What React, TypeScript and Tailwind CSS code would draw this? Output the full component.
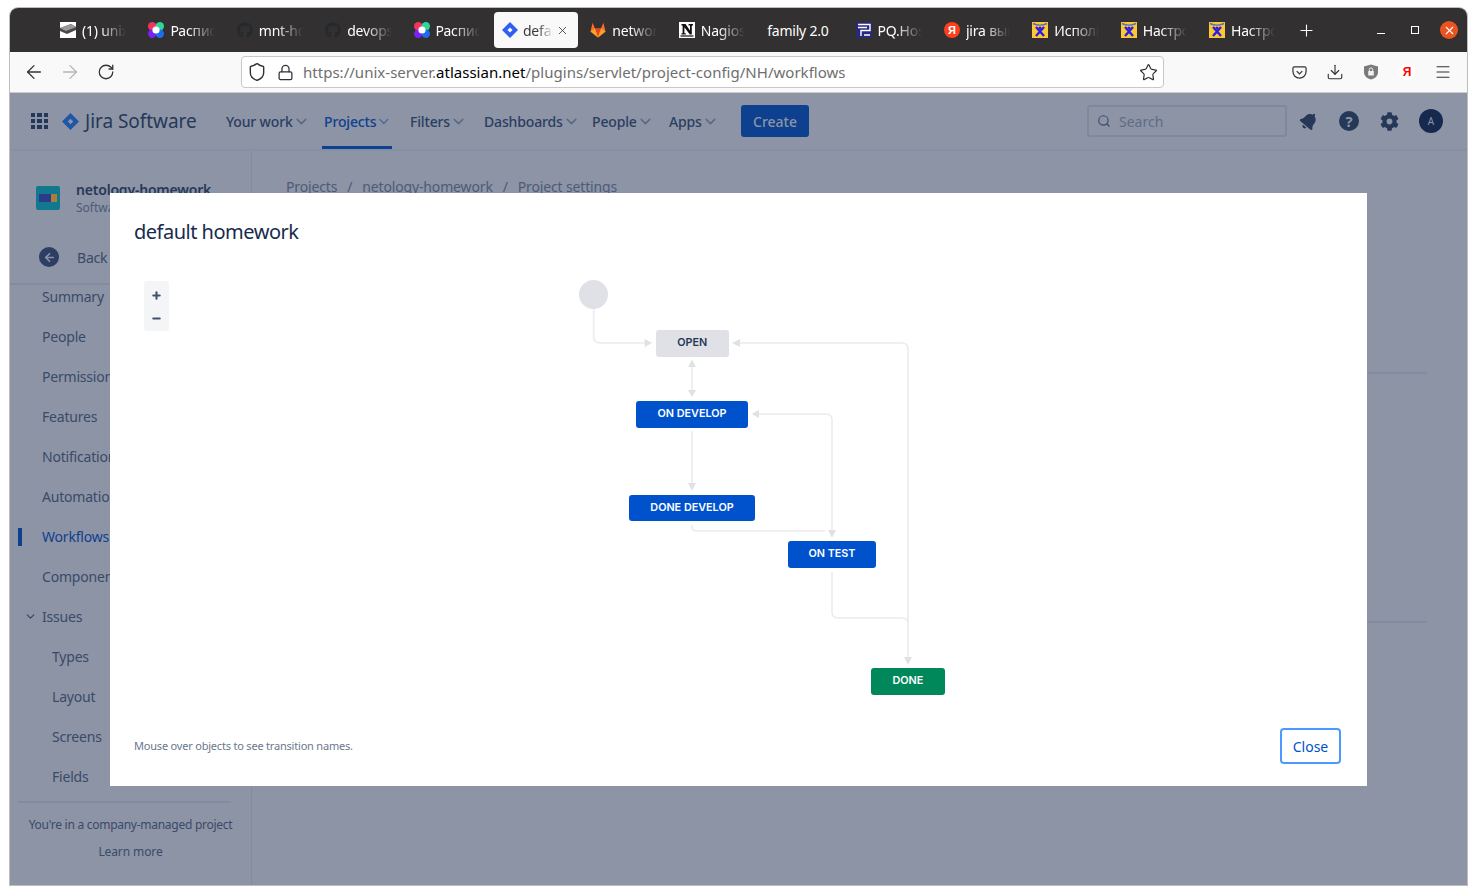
import { ArrowLeft, ArrowRight, RotateCw, Shield, Lock, Star, Download, Menu, Search, ChevronDown, Plus, Minus, X } from "lucide-react";
import { FaGithub, FaBell, FaCog } from "react-icons/fa";

const ui = "font-['Noto_Sans',sans-serif]";

function RainbowIcon() {
  return (
    <svg viewBox="0 0 16 16" className="h-4 w-4 shrink-0">
      <circle cx="4.2" cy="4.2" r="4.2" fill="#f0365f" />
      <circle cx="11.8" cy="4.2" r="4.2" fill="#2fd69b" />
      <circle cx="4.2" cy="11.8" r="4.2" fill="#7a22f5" />
      <circle cx="11.8" cy="11.8" r="4.2" fill="#1f6cf0" />
      <circle cx="8" cy="8" r="3.6" fill="#fff" />
    </svg>
  );
}

function ServerIcon() {
  return (
    <svg viewBox="0 0 16 16" className="h-4 w-4 shrink-0">
      <rect width="16" height="16" fill="#fff" />
      <path d="M0 6 L11 2 L16 5 L16 8 L7 12 L0 9 Z" fill="#4a4a4a" />
      <path d="M0 6 L11 2 L16 5 L6 9 Z" fill="#9a9a9a" />
    </svg>
  );
}

function GitlabIcon() {
  return (
    <svg viewBox="0 0 16 16" className="h-4 w-4 shrink-0">
      <path d="M8 15.5 L0.5 9.5 L2.6 0.8 L5 6.5 H11 L13.4 0.8 L15.5 9.5 Z" fill="#fc6d26" />
      <path d="M8 15.5 L5 6.5 H11 Z" fill="#e24329" />
      <path d="M8 15.5 L0.5 9.5 L5 6.5 Z" fill="#fca326" />
      <path d="M8 15.5 L15.5 9.5 L11 6.5 Z" fill="#fca326" />
    </svg>
  );
}

function NotionIcon() {
  return (
    <div className="flex h-4 w-4 shrink-0 items-center justify-center bg-white">
      <svg viewBox="0 0 16 16" className="h-4 w-4">
        <path d="M2.5 2 H6.5 L11 8.5 V3.4 H9.6 V2 H14 V3.4 H12.8 V12.6 H10.8 L5.4 5.2 V11.2 H6.8 V12.6 H2.5 V11.2 H3.6 V3.4 H2.5 Z" fill="#111" />
        <rect x="1.5" y="13.4" width="13" height="1.2" fill="#111" />
      </svg>
    </div>
  );
}

function PqIcon() {
  return (
    <svg viewBox="0 0 16 16" className="h-4 w-4 shrink-0">
      <rect width="16" height="16" rx="1" fill="#27297a" />
      <path d="M2 2.5 H14 V8.5 H5 V14 M2 5.5 H11 M8 13 H14" stroke="#fff" strokeWidth="1.4" fill="none" />
    </svg>
  );
}

function YandexIcon() {
  return (
    <div className="flex h-4 w-4 shrink-0 items-center justify-center rounded-full bg-[#fc3f1d] font-['Liberation_Sans',sans-serif] text-[11px] font-bold leading-none text-white">
      Я
    </div>
  );
}

function BeeIcon() {
  return (
    <svg viewBox="0 0 16 16" className="h-4 w-4 shrink-0">
      <rect width="16" height="16" fill="#fcc934" />
      <path d="M1 1.5 C5 3.5 11 3.5 15 1.5" stroke="#4b6fd8" strokeWidth="1.4" fill="none" />
      <path d="M4 5 L12 14 M12 5 L4 14" stroke="#2a1fe0" strokeWidth="2.4" />
      <circle cx="8" cy="6" r="1.6" fill="#2a1fe0" />
    </svg>
  );
}

function JiraDiamond({ className, color }: { className: string; color: string }) {
  return (
    <svg viewBox="0 0 16 16" className={className}>
      <path d="M8 0 L16 8 L8 16 L0 8 Z M8 5.4 L5.4 8 L8 10.6 L10.6 8 Z" fill={color} fillRule="evenodd" />
    </svg>
  );
}

const tabs = [
  { icon: <ServerIcon />, title: "(1) unix-server" },
  { icon: <RainbowIcon />, title: "Расписание" },
  { icon: <FaGithub className="h-4 w-4 shrink-0 text-[#24292e]" />, title: "mnt-homework" },
  { icon: <FaGithub className="h-4 w-4 shrink-0 text-[#24292e]" />, title: "devops-netology" },
  { icon: <RainbowIcon />, title: "Расписание" },
  { icon: <JiraDiamond className="h-4 w-4 shrink-0" color="#2f5ff0" />, title: "default", active: true },
  { icon: <GitlabIcon />, title: "network" },
  { icon: <NotionIcon />, title: "Nagios" },
  { icon: null, title: "family 2.0", full: true },
  { icon: <PqIcon />, title: "PQ.Hosting" },
  { icon: <YandexIcon />, title: "jira вышла" },
  { icon: <BeeIcon />, title: "Использование" },
  { icon: <BeeIcon />, title: "Настройка" },
  { icon: <BeeIcon />, title: "Настройка" },
];

function TabBar() {
  return (
    <div className="flex h-[44px] shrink-0 items-stretch rounded-t-[8px] bg-[#323030] pl-[40px]">
      {tabs.map((t, i) =>
        t.active ? (
          <div key={i} className="w-[88.4px] shrink-0 py-[4px] pl-[2px] pr-[2px]">
            <div className="flex h-full items-center gap-[5px] rounded-[4px] bg-[#f9f9fa] pl-[8px] pr-[6px] text-[14px] tracking-[-0.2px] text-[#3a3a3a]">
              {t.icon}
              <span className="w-[30px] overflow-hidden whitespace-nowrap [mask-image:linear-gradient(to_right,#000_50%,transparent)]">{t.title}</span>
              <X size={13} strokeWidth={1.5} className="-ml-[2px] shrink-0 text-[#333]" />
            </div>
          </div>
        ) : (
          <div key={i} className="flex w-[88.4px] shrink-0 items-center gap-[6px] pl-[10px] pr-[12px] text-[14px] tracking-[-0.2px] text-white">
            {t.icon}
            <span className={t.full ? "whitespace-nowrap" : "overflow-hidden whitespace-nowrap [mask-image:linear-gradient(to_right,#000_40%,transparent)]"}>{t.title}</span>
          </div>
        )
      )}
      <div className="flex w-[38px] items-center justify-center text-white">
        <Plus size={19} strokeWidth={1.4} />
      </div>
      <div className="ml-auto flex items-center pr-[1px] text-white">
        <div className="flex w-[34px] justify-center"><div className="mt-[6px] h-px w-[8px] bg-white" /></div>
        <div className="flex w-[34px] justify-center"><div className="h-[8px] w-[8px] border border-white" /></div>
        <div className="flex w-[34px] justify-center">
          <div className="flex h-[18px] w-[18px] items-center justify-center rounded-full bg-[#e95420]"><X size={13} strokeWidth={2} /></div>
        </div>
      </div>
    </div>
  );
}

function ToolBar() {
  return (
    <div className="flex h-[41px] shrink-0 items-center border-b border-[#ccc] bg-[#f9f9fa] text-[#333]">
      <div className="flex w-[231px] shrink-0 pl-[6px]">
        <div className="flex w-[36px] justify-center"><ArrowLeft size={22} strokeWidth={1.4} /></div>
        <div className="flex w-[36px] justify-center text-[#b5b5b5]"><ArrowRight size={22} strokeWidth={1.4} /></div>
        <div className="flex w-[36px] items-center justify-center"><RotateCw size={18} strokeWidth={1.7} /></div>
      </div>
      <div className="flex h-[32px] w-[923px] shrink-0 items-center rounded-[4px] border border-[#c8c8c8] bg-white pl-[5px] pr-[5px]">
        <Shield size={20} strokeWidth={1.7} className="shrink-0" />
        <Lock size={17} strokeWidth={1.8} className="ml-[10px] shrink-0" />
        <span className="ml-[9px] whitespace-nowrap text-[15px] tracking-[0.02px] text-[#6e6e6e]">
          https://unix-server.<span className="text-black">atlassian.net</span>/plugins/servlet/project-config/NH/workflows
        </span>
        <Star size={19} strokeWidth={1.5} className="ml-auto shrink-0" />
      </div>
      <div className="ml-[117px] flex items-center">
        <div className="flex w-[36px] justify-center">
          <svg viewBox="0 0 16 16" className="h-[15px] w-[15px]" fill="none" stroke="#333" strokeWidth="1.3">
            <path d="M2.5 2 H13.5 A1.5 1.5 0 0 1 15 3.5 V7 A7 7 0 0 1 1 7 V3.5 A1.5 1.5 0 0 1 2.5 2 Z" />
            <path d="M5 6.5 L8 9.5 L11 6.5" />
          </svg>
        </div>
        <div className="flex w-[36px] justify-center"><Download size={18} strokeWidth={1.5} /></div>
        <div className="flex w-[36px] justify-center">
          <svg viewBox="0 0 16 16" className="h-[16px] w-[16px]">
            <path d="M8 0.5 L15 2.5 V8 C15 12 12 14.5 8 15.5 C4 14.5 1 12 1 8 V2.5 Z" fill="#7a7a7a" />
            <rect x="5.2" y="7" width="5.6" height="4.6" rx="0.6" fill="#f0f0f0" />
            <path d="M6.3 7 V5.6 A1.7 1.7 0 0 1 9.7 5.6 V7" stroke="#f0f0f0" strokeWidth="1" fill="none" />
          </svg>
        </div>
        <div className="flex w-[36px] justify-center">
          <div className="flex h-[16px] w-[16px] items-center justify-center rounded-full bg-white font-['Liberation_Sans',sans-serif] text-[12px] font-bold leading-none text-[#f00]">Я</div>
        </div>
        <div className="flex w-[36px] justify-center"><Menu size={18} strokeWidth={1.4} /></div>
      </div>
    </div>
  );
}

const navItems = [
  { label: "Your work", cls: "w-[98px]" },
  { label: "Projects", cls: "w-[86px]", active: true },
  { label: "Filters", cls: "w-[74px]" },
  { label: "Dashboards", cls: "w-[108px]" },
  { label: "People", cls: "w-[77px]" },
  { label: "Apps", cls: "w-[74px]" },
];

function JiraHeader() {
  return (
    <div className="flex h-[58px] shrink-0 items-center border-b-2 border-[#8490a3] pl-[21px] text-[#2b3d61]">
      <div className="grid h-[16px] w-[17px] shrink-0 grid-cols-3 gap-[2px]">
        {Array.from({ length: 9 }).map((_, i) => (
          <div key={i} className="bg-[#253858]" />
        ))}
      </div>
      <JiraDiamond className="ml-[14px] h-[17px] w-[17px] shrink-0" color="#1f56a8" />
      <span className="ml-[6px] w-[139px] whitespace-nowrap text-[19px] tracking-[-0.05px] text-[#253858]">Jira Software</span>
      <div className="flex h-full items-stretch">
        {navItems.map((n) => (
          <div key={n.label} className={`${n.cls} shrink-0`}>
            <div className={n.active ? "flex h-full w-[70px] items-center border-b-[3px] border-[#0d408f] pl-[2px] pt-[3px] text-[#0f408f]" : "flex h-full items-center pl-[2px]"}>
              <span className="whitespace-nowrap text-[14px] font-medium tracking-[-0.15px]">{n.label}</span>
              <ChevronDown size={17} strokeWidth={2} className="opacity-50" />
            </div>
          </div>
        ))}
      </div>
      <div className="flex h-[32px] w-[68px] shrink-0 items-center justify-center rounded-[3px] bg-[#0d408f] text-[14px] font-medium text-[#8c94a5]">Create</div>
      <div className="ml-[278px] flex h-[32px] w-[200px] shrink-0 items-center rounded-[3px] border-2 border-[#7f899c] pl-[8px] text-[14px] text-[#5f6c85]">
        <Search size={14} strokeWidth={2} className="text-[#3f4e6c]" />
        <span className="ml-[8px]">Search</span>
      </div>
      <div className="ml-[2px] flex items-center">
        <div className="flex w-[40px] justify-center"><FaBell size={18} className="rotate-[40deg] text-[#253858]" /></div>
        <div className="flex w-[40px] justify-center">
          <div className="flex h-[20px] w-[20px] items-center justify-center rounded-full bg-[#253858] text-[15px] font-bold leading-none text-[#8c94a5]">?</div>
        </div>
        <div className="flex w-[40px] justify-center"><FaCog size={19} className="text-[#253858]" /></div>
        <div className="ml-[10px] flex h-[24px] w-[24px] items-center justify-center rounded-full bg-[#16294f] text-[10px] text-[#8c94a5]">A</div>
      </div>
    </div>
  );
}

const sideItems = [
  { label: "Summary" },
  { label: "People" },
  { label: "Permissions" },
  { label: "Features" },
  { label: "Notifications" },
  { label: "Automation" },
  { label: "Workflows", active: true },
  { label: "Components" },
  { label: "Issues", chevron: true },
  { label: "Types", sub: true },
  { label: "Layout", sub: true },
  { label: "Screens", sub: true },
  { label: "Fields", sub: true },
];

function Sidebar() {
  return (
    <div className="flex w-[242px] shrink-0 flex-col border-r border-[#838b9d] text-[#3a4a69]">
      <div className="flex h-[54px] items-center pl-[26px] pt-[40px]">
        <div className="flex h-[24px] w-[24px] shrink-0 items-center justify-center rounded-[2px] bg-[#12788f]">
          <div className="flex h-[8px] w-[18px]">
            <div className="w-[12px] bg-[#2b3a8a]" />
            <div className="w-[6px] bg-[#a87f3a]" />
          </div>
        </div>
        <div className="ml-[16px] flex flex-col">
          <span className="whitespace-nowrap text-[14px] font-semibold leading-[20px] tracking-[-0.2px] text-[#253858]">netology-homework</span>
          <span className="text-[12px] leading-[16px] text-[#4d5b78]">Software project</span>
        </div>
      </div>
      <div className="mt-[33px] flex h-[47px] items-center border-b-2 border-[#838c9e] pb-[7px] pl-[29px]">
        <div className="flex h-[20px] w-[20px] items-center justify-center rounded-full bg-[#2c3e63]">
          <ArrowLeft size={13} strokeWidth={3} className="text-[#8c94a5]" />
        </div>
        <span className="ml-[18px] text-[14px] tracking-[-0.2px]">Back to project</span>
      </div>
      <div className="-mt-[9px] flex flex-col">
        {sideItems.map((s) => (
          <div key={s.label} className="relative flex h-[40px] items-center text-[14px] tracking-[-0.2px]">
            {s.active && <div className="absolute left-[8px] top-[12px] h-[18px] w-[4px] bg-[#0d408f]" />}
            {s.chevron && <ChevronDown size={13} strokeWidth={2.5} className="absolute left-[14px]" />}
            <span className={`whitespace-nowrap ${s.sub ? "pl-[42px]" : "pl-[32px]"} ${s.active ? "text-[#0f408f]" : ""}`}>{s.label}</span>
          </div>
        ))}
      </div>
      <div className="ml-[8px] mt-[5px] w-[213px] border-t-2 border-[#838c9e]" />
      <div className="mt-[13px] whitespace-nowrap text-center text-[12px] tracking-[-0.27px]">You're in a company-managed project</div>
      <div className="mt-[9px] text-center text-[12px] tracking-[-0.1px]">Learn more</div>
    </div>
  );
}

function PageContent() {
  return (
    <div className="flex flex-1 flex-col pl-[34px] pt-[25px] text-[14px] tracking-[-0.15px] text-[#4d5b78]">
      <div className="flex gap-[10px] whitespace-nowrap">
        <span>Projects</span>
        <span>/</span>
        <span>netology-homework</span>
        <span>/</span>
        <span>Project settings</span>
      </div>
      <div className="ml-auto mr-[40px] mt-[175px] h-[2px] w-[60px] bg-[#838c9e]" />
      <div className="ml-auto mr-[40px] mt-[247px] h-[2px] w-[60px] bg-[#838c9e]" />
    </div>
  );
}

const nodes = [
  { label: "OPEN", cls: "left-[545.5px] top-[137px] w-[73.5px] bg-[#dfe1e6] text-[#253858]" },
  { label: "ON DEVELOP", cls: "left-[526px] top-[208px] w-[112px] bg-[#0052cc] text-white" },
  { label: "DONE DEVELOP", cls: "left-[519px] top-[301.5px] w-[126px] bg-[#0052cc] text-white" },
  { label: "ON TEST", cls: "left-[677.7px] top-[348.3px] w-[88.6px] bg-[#0052cc] text-white" },
  { label: "DONE", cls: "left-[761px] top-[475.3px] w-[73.7px] bg-[#00875a] text-white" },
];

// diagram coordinates are relative to the modal
function Connectors() {
  const line = "#ebecf0";
  const head = "#dfe1e6";
  return (
    <svg className="absolute left-0 top-0" width="1257" height="593" fill="none">
      <g stroke={line} strokeWidth="1.6">
        <path d="M483.7 116 V144 Q483.7 150 489.7 150 H535" />
        <path d="M582 174 V197" />
        <path d="M582 238 V290" />
        <path d="M649 221 H716 Q722 221 722 227 V337" />
        <path d="M582 332 V334 Q582 338 586 338 H715" />
        <path d="M630 150 H792 Q798 150 798 156 V464" />
        <path d="M722 379 V419 Q722 425 728 425 H792 Q798 425 798 431" />
      </g>
      <g fill={head}>
        <path d="M542 150 L534.7 146 V154 Z" />
        <path d="M582 166.5 L578 174 H586 Z" />
        <path d="M582 204 L578 197 H586 Z" />
        <path d="M582 297.7 L578 290 H586 Z" />
        <path d="M641.7 221 L649 217 V225 Z" />
        <path d="M722 344.7 L718 337 H726 Z" />
        <path d="M622 150 L630 146 V154 Z" />
        <path d="M798 472 L794 464 H802 Z" />
      </g>
    </svg>
  );
}

function WorkflowModal() {
  return (
    <div className="absolute left-[100px] top-[100px] flex h-[593px] w-[1257px] flex-col bg-white pl-[24px] pr-[26px]">
      <h2 className="pt-[25px] text-[20px] leading-[28px] tracking-[-0.5px] text-[#172b4d]">default homework</h2>
      <div className="ml-[10px] mt-[35px] flex h-[50px] w-[25px] flex-col items-center justify-center gap-[12px] rounded-[3px] bg-[#f4f5f7] pt-[1px] text-[#42526e]">
        <Plus size={11} strokeWidth={4.5} />
        <Minus size={11} strokeWidth={4.5} />
      </div>
      <Connectors />
      <div className="absolute left-[469px] top-[87px] h-[29px] w-[29px] rounded-full bg-[#dfe1e6]" />
      {nodes.map((n) => (
        <div key={n.label} className={`absolute flex h-[26.5px] items-center justify-center rounded-[3px] font-['Inter',sans-serif] text-[10.8px] font-semibold ${n.cls}`}>
          {n.label}
        </div>
      ))}
      <div className="mt-auto flex items-center justify-between pb-[22px]">
        <span className="text-[11px] tracking-[-0.2px] text-[#6b778c]">Mouse over objects to see transition names.</span>
        <div className="flex h-[36px] w-[61px] items-center justify-center rounded-[4px] border-2 border-[#4c9aff] text-[14px] text-[#0052cc]">Close</div>
      </div>
    </div>
  );
}

export default function App() {
  return (
    <div className={`h-[895px] w-[1477px] overflow-hidden bg-white pl-[10px] pt-[8px] ${ui}`}>
      <div className="flex h-[877px] w-[1457px] flex-col rounded-t-[8px] shadow-[0_0_0_1px_#bdbdbd]">
        <TabBar />
        <ToolBar />
        <div className="relative flex min-h-0 flex-1 flex-col overflow-hidden bg-[#8c94a5]">
          <JiraHeader />
          <div className="flex min-h-0 flex-1">
            <Sidebar />
            <PageContent />
          </div>
          <WorkflowModal />
        </div>
      </div>
    </div>
  );
}
